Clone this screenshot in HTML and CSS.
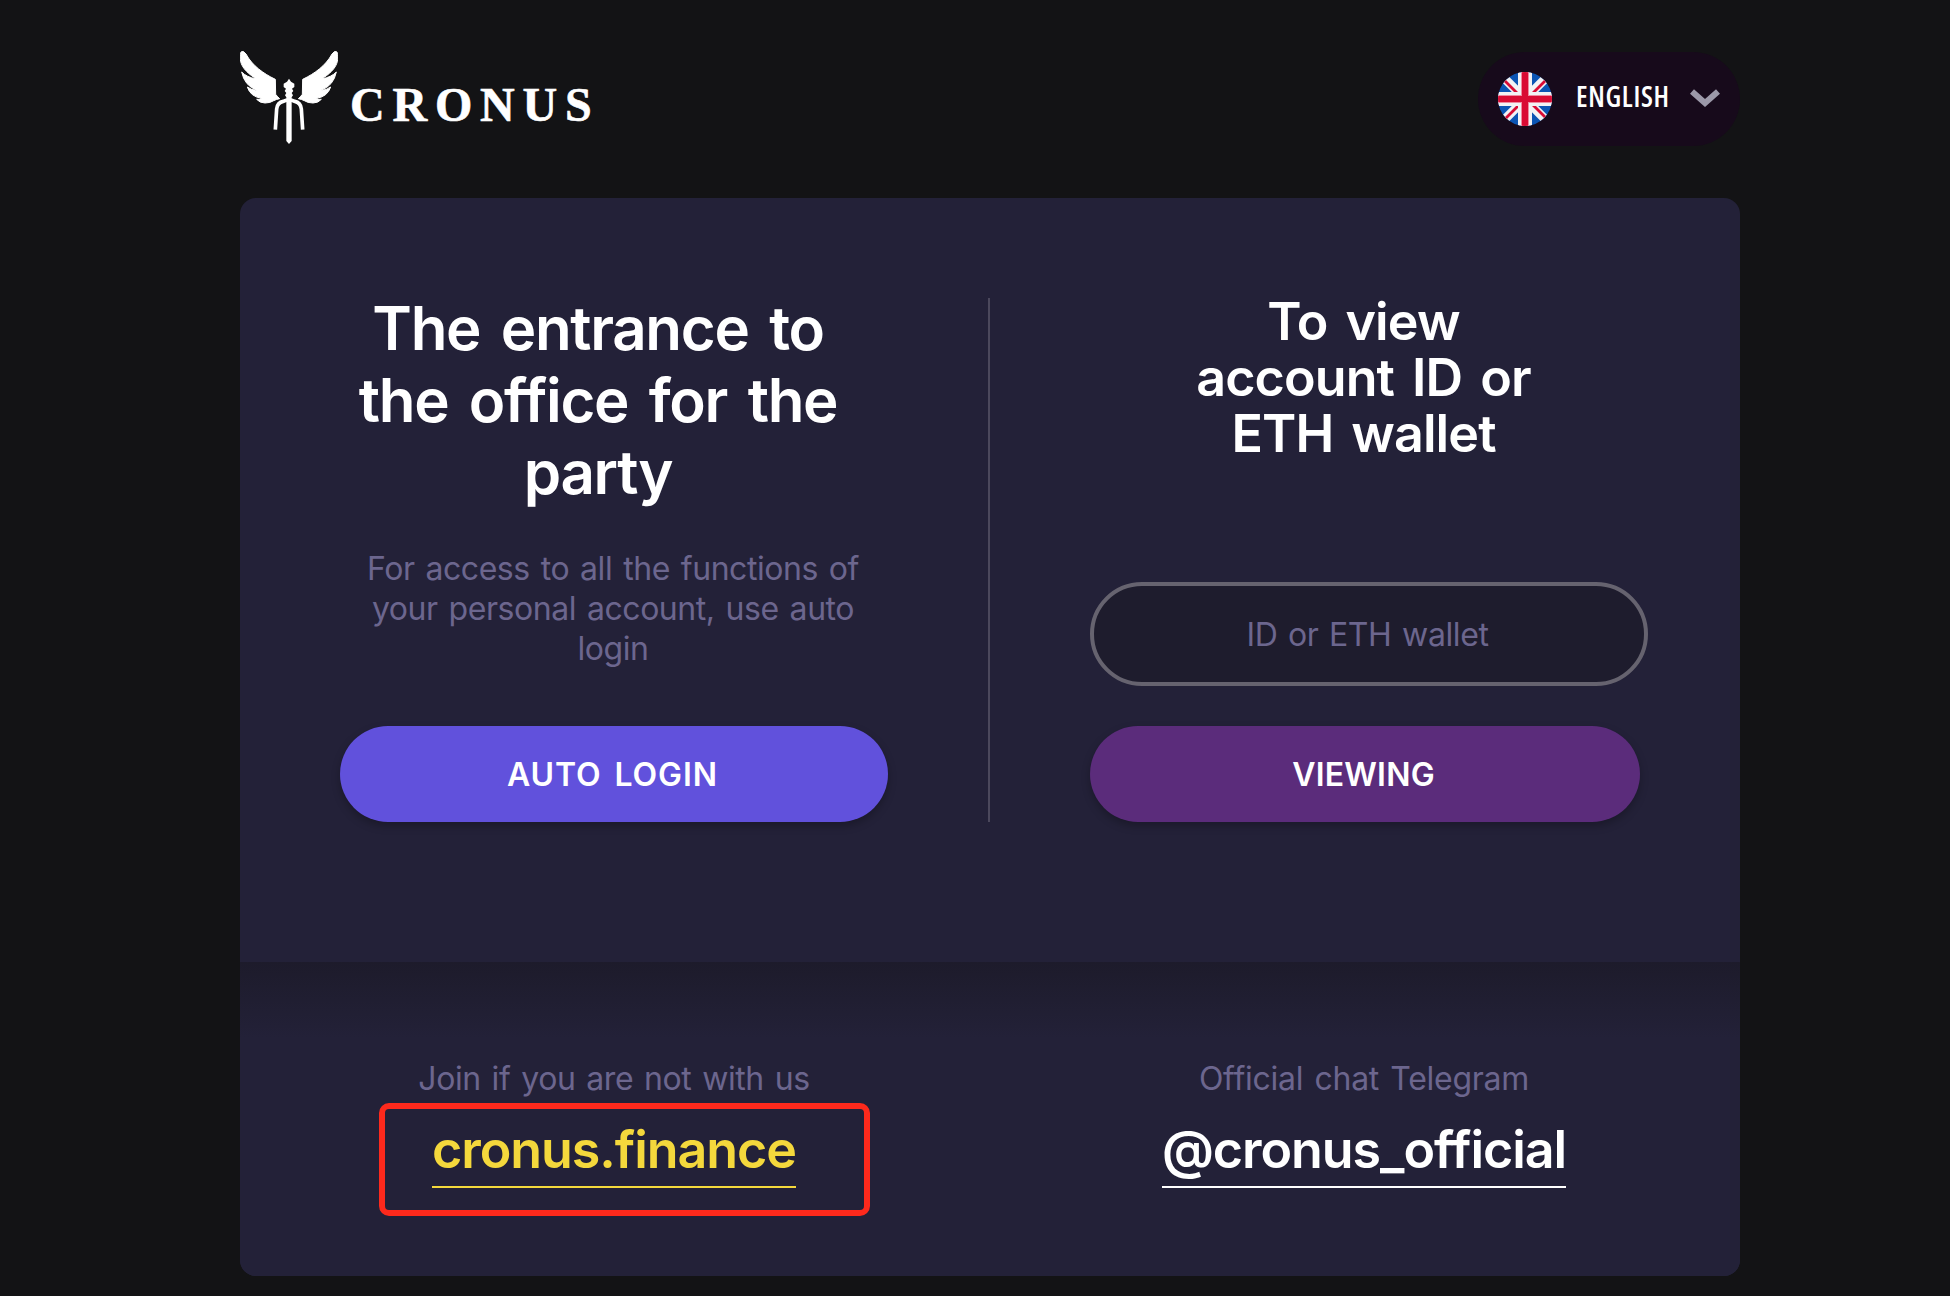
FILE: index.html
```html
<!DOCTYPE html>
<html lang="en">
<head>
<meta charset="utf-8">
<title>Cronus</title>
<link rel="stylesheet" href="styles.css">
</head>
<body>
<div class="page">
  <header class="header">
    <a class="logo">
      <svg class="logo-mark" viewBox="15 15 294 282" fill="#fff">
        <defs>
          <path id="wing" d="M18 21Q25 15 33 27C52 62 84 85 121 103L122 148Q128 156 134 161Q124 163 116 167Q106 174 90 174Q74 174 65 163Q74 164 80 160Q46 155 37 126Q50 136 66 136Q28 122 20 81Q34 96 64 102C40 86 6 62 18 21Z" stroke="#fff" stroke-width="3" stroke-linejoin="round"/>
        </defs>
        <use href="#wing"/>
        <use href="#wing" transform="translate(324 0) scale(-1 1)"/>
        <path d="M162 101L168 110L178 116V126L171 131L175 138L170 144L174 151L170 157V288L162 297L154 288V157L150 151L154 144L149 138L153 131L146 126V116L156 110Z"/>
        <path d="M121 254L125 192Q127 172 145 169Q162 160 179 169Q197 172 199 192L203 254" fill="none" stroke="#fff" stroke-width="11"/>
      </svg>
      <span class="logo-text">CRONUS</span>
    </a>
    <div class="lang">
      <svg class="flag" viewBox="0 0 54 54">
        <clipPath id="disc"><circle cx="27" cy="27" r="27"/></clipPath>
        <g clip-path="url(#disc)">
          <path fill="#0b55b4" d="M0 0h54v54H0z"/>
          <path stroke="#f2f2f4" stroke-width="9" d="M0 0l54 54M54 0L0 54"/>
          <path stroke="#d90b34" stroke-width="2.8" d="M5 7l18 18M49 7L31 25M5 49l18-18M49 47L31 29"/>
          <path fill="#f2f2f4" d="M20 0h14v54H20zM0 20h54v14H0z"/>
          <path fill="#ee8ba0" d="M23 0h8v54h-8zM0 23h54v8H0z"/>
          <path fill="#d90b34" d="M24 0h6v54h-6zM0 24h54v6H0z"/>
        </g>
      </svg>
      <span class="lang-name">ENGLISH</span>
      <svg class="chevron" viewBox="0 0 30 18"><path d="M2 2.5L15 14L28 2.5" fill="none" stroke="#9c99a9" stroke-width="6"/></svg>
    </div>
  </header>

  <main class="card">
    <div class="access">
      <section class="login">
        <h1 class="title">The entrance to<br>the office for the<br>party</h1>
        <p class="note">For access to all the functions of<br>your personal account, use auto<br>login</p>
        <button class="btn btn-login">AUTO LOGIN</button>
      </section>
      <div class="divider"></div>
      <section class="view">
        <h2 class="subtitle">To view<br>account ID or<br>ETH wallet</h2>
        <input class="field" type="text" placeholder="ID or ETH wallet">
        <button class="btn btn-view">VIEWING</button>
      </section>
    </div>
    <footer class="links">
      <div class="link-col">
        <span class="hint">Join if you are not with us</span>
        <a class="link link-site">cronus.finance</a>
        <div class="highlight"></div>
      </div>
      <div class="link-col">
        <span class="hint hint-chat">Official chat Telegram</span>
        <a class="link">@cronus_official</a>
      </div>
    </footer>
  </main>
</div>
</body>
</html>
```
FILE: styles.css
```css
* { box-sizing: border-box; }

body {
  margin: 0;
  height: 1296px;
  overflow: hidden;
  background: #131315;
  color: #fff;
  font-family: Inter, "Liberation Sans", sans-serif;
}

.page {
  width: 1500px;
  margin-left: 240px;
}

.header {
  display: flex;
  justify-content: space-between;
  height: 198px;
  padding-top: 50px;
}

.logo { display: flex; }
.logo-mark { width: 98px; height: 94px; }

.logo-text {
  margin: 27px 0 0 12px;
  font: bold 48px/56px "Liberation Serif", serif;
  letter-spacing: 7.8px;
  -webkit-text-stroke: 0.6px #fff;
}

.lang {
  display: flex;
  align-items: center;
  width: 262px;
  height: 94px;
  margin-top: 2px;
  padding: 0 20px;
  border-radius: 47px;
  background: #170a1b;
}

.flag { width: 54px; height: 54px; }

.lang-name {
  width: 92px;
  margin: -6px 22px 0 24px;
  font: 600 28px/40px "Open Sans", sans-serif;
  font-stretch: 75%;
  letter-spacing: 0.7px;
}

.chevron { width: 30px; height: 18px; margin-top: -2px; }

.card {
  height: 1078px;
  overflow: hidden;
  border-radius: 16px;
  background: #232138;
}

.access {
  display: grid;
  grid-template-columns: 548px 2px 550px;
  justify-content: space-between;
  height: 764px;
  padding: 100px 100px 140px;
}

.login, .view {
  display: flex;
  flex-direction: column;
  text-align: center;
}

.divider { background: #4b485c; }

.title {
  margin: -6px 32px 41px 0;
  font-size: 60px;
  font-weight: 600;
  line-height: 72px;
  letter-spacing: -1.3px;
  word-spacing: 6.7px;
}

.subtitle {
  margin: -4px 3px 120px 0;
  font-size: 52px;
  font-weight: 600;
  line-height: 56px;
  letter-spacing: -0.9px;
  word-spacing: 5.8px;
}

.note, .hint {
  margin: 0;
  color: #6c668e;
  font-size: 32px;
  line-height: 40px;
  letter-spacing: -0.45px;
  word-spacing: 2.4px;
}

.note { margin: 0 2px 57px 0; }

.btn {
  height: 96px;
  padding: 2px 3px 0 0;
  border: 0;
  border-radius: 48px;
  box-shadow: 0 4px 8px rgba(0, 0, 0, 0.25);
  color: #fff;
  font: 600 32px/40px Inter, sans-serif;
}

.btn-login {
  background: #6151dc;
  letter-spacing: 0.9px;
  word-spacing: 4px;
}

.btn-view {
  background: #5b2c7b;
  letter-spacing: 0.2px;
}

.field {
  width: 558px;
  height: 104px;
  margin-bottom: 40px;
  padding: 1px 3px 0 0;
  border: 4px solid #66636f;
  border-radius: 52px;
  background: #1e1c2d;
  color: #fff;
  font: 32px/40px Inter, sans-serif;
  letter-spacing: -0.4px;
  word-spacing: 2px;
  text-align: center;
}

.field::placeholder { color: #6c668e; opacity: 1; }

.links {
  display: grid;
  grid-template-columns: 748px 752px;
  height: 314px;
  padding-top: 97px;
  background: linear-gradient(#1d1b2b, #232138 76px);
}

.link-col {
  position: relative;
  display: flex;
  flex-direction: column;
  align-items: center;
}

.hint-chat { letter-spacing: -0.25px; }

.link {
  margin-top: 25px;
  padding-bottom: 10px;
  border-bottom: 2px solid;
  font-size: 52px;
  font-weight: 600;
  line-height: 52px;
  letter-spacing: -1.08px;
}

.link-site { color: #f4d83c; }

/* marker frame drawn over the site link */
.highlight {
  position: absolute;
  top: 44px;
  left: 139px;
  width: 491px;
  height: 113px;
  border: 6px solid #fd291c;
  border-radius: 10px;
}
```
